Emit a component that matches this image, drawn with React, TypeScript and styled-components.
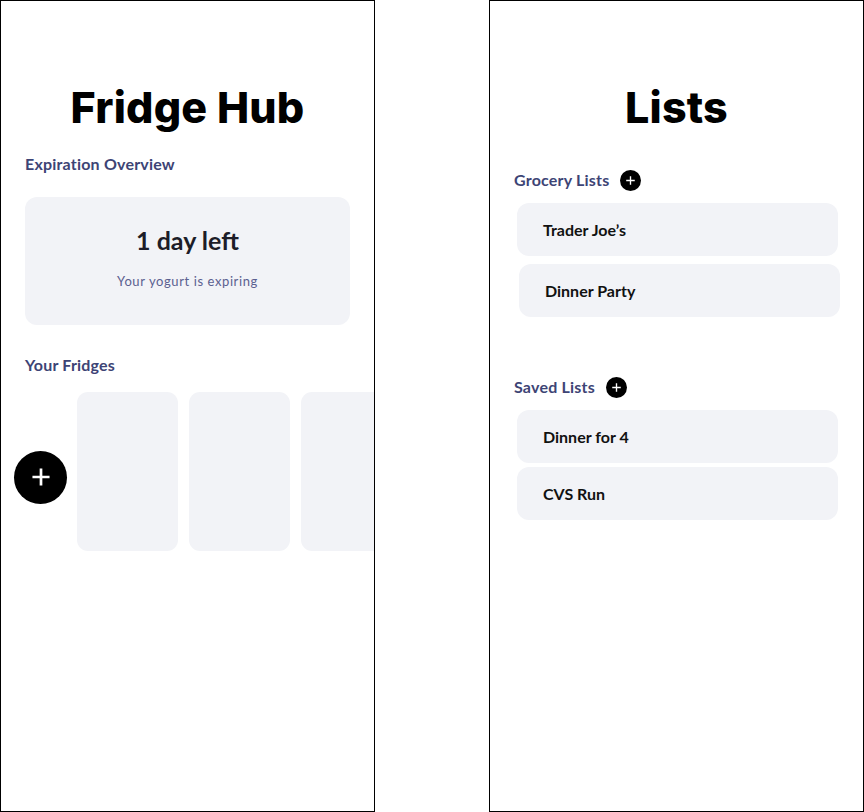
import styled, { createGlobalStyle } from 'styled-components';

const GlobalStyle = createGlobalStyle`
  body {
    margin: 0;
    background: #fff;
    font-family: "Lato", "Noto Sans", sans-serif;
  }
`;

const Page = styled.div`
  display: flex;
  gap: 114px;
  width: 864px;
`;

const Frame = styled.section`
  box-sizing: border-box;
  width: 375px;
  height: 812px;
  border: 1px solid #000;
  background: #fff;
  overflow: hidden;
  display: flex;
  flex-direction: column;
`;

const Title = styled.h1`
  margin: 80px 0 0;
  font-family: "Inter", "DejaVu Sans", sans-serif;
  font-weight: 800;
  font-size: 43px;
  line-height: 52px;
  letter-spacing: 0.2px;
  text-align: center;
  color: #000;
`;

const SectionHeading = styled.div<{ $top: number }>`
  display: flex;
  align-items: center;
  gap: 11px;
  margin: ${p => p.$top}px 0 0 24px;
  font-size: 16px;
  font-weight: 700;
  line-height: 22px;
  letter-spacing: 0.2px;
  color: #3d4475;
`;

const ExpiryCard = styled.div`
  margin: 22px 24px 0 24px;
  height: 128px;
  border-radius: 12px;
  background: #f2f3f7;
  display: flex;
  flex-direction: column;
  align-items: center;
`;

const ExpiryDays = styled.div`
  margin-top: 28px;
  font-size: 25px;
  font-weight: 700;
  line-height: 30px;
  color: #1d1d28;
`;

const ExpiryNote = styled.div`
  margin-top: 18px;
  font-size: 13px;
  letter-spacing: 0.6px;
  color: #5b6090;
`;

const FridgeRow = styled.div`
  display: flex;
  align-items: center;
  gap: 11px;
  margin: 16px 0 0 13px;
`;

const AddFridge = styled.button`
  flex: none;
  width: 53px;
  height: 53px;
  margin-top: 11px;
  margin-right: -1px;
  border: none;
  border-radius: 50%;
  background: #000;
  display: flex;
  align-items: center;
  justify-content: center;
  padding: 0;
`;

const FridgeCard = styled.div`
  flex: none;
  width: 101px;
  height: 159px;
  border-radius: 11px;
  background: #f2f3f7;
`;

const SmallAdd = styled.span`
  width: 21px;
  height: 21px;
  border-radius: 50%;
  background: #000;
  display: inline-flex;
  align-items: center;
  justify-content: center;
`;

const ListGroup = styled.div`
  display: flex;
  flex-direction: column;
  margin: 12px 0 0 27px;
`;

const ListItem = styled.div<{ $shift?: number; $gap: number }>`
  box-sizing: border-box;
  flex: none;
  width: 321px;
  height: 53px;
  margin-left: ${p => p.$shift ?? 0}px;
  margin-top: ${p => p.$gap}px;
  padding-left: 26px;
  border-radius: 12px;
  background: #f2f3f7;
  display: flex;
  align-items: center;
  font-size: 16px;
  font-weight: 700;
  color: #111;
`;

function Plus({ size, stroke }: { size: number; stroke: number }) {
  return (
    <svg width={size} height={size} viewBox="0 0 20 20">
      <path d="M10 2v16M2 10h16" stroke="#fff" strokeWidth={stroke} strokeLinecap="square" />
    </svg>
  );
}

export default function App() {
  return (
    <>
      <GlobalStyle />
      <Page>
        <Frame>
          <Title>Fridge Hub</Title>
          <SectionHeading $top={20}>Expiration Overview</SectionHeading>
          <ExpiryCard>
            <ExpiryDays>1 day left</ExpiryDays>
            <ExpiryNote>Your yogurt is expiring</ExpiryNote>
          </ExpiryCard>
          <SectionHeading $top={29}>Your Fridges</SectionHeading>
          <FridgeRow>
            <AddFridge aria-label="Add fridge">
              <Plus size={18} stroke={3} />
            </AddFridge>
            <FridgeCard />
            <FridgeCard />
            <FridgeCard />
          </FridgeRow>
        </Frame>
        <Frame>
          <Title>Lists</Title>
          <SectionHeading $top={36}>
            Grocery Lists
            <SmallAdd><Plus size={9} stroke={3} /></SmallAdd>
          </SectionHeading>
          <ListGroup>
            <ListItem $gap={0}>Trader Joe’s</ListItem>
            <ListItem $gap={8} $shift={2}>Dinner Party</ListItem>
          </ListGroup>
          <SectionHeading $top={59}>
            Saved Lists
            <SmallAdd><Plus size={9} stroke={3} /></SmallAdd>
          </SectionHeading>
          <ListGroup>
            <ListItem $gap={0}>Dinner for 4</ListItem>
            <ListItem $gap={4}>CVS Run</ListItem>
          </ListGroup>
        </Frame>
      </Page>
    </>
  );
}
